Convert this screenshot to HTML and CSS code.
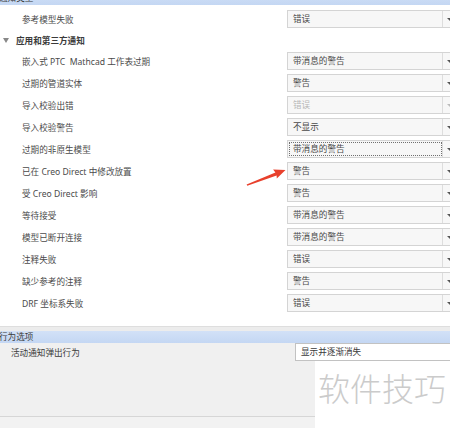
FILE: index.html
```html
<!DOCTYPE html>
<html lang="zh-CN">
<head>
<meta charset="utf-8">
<title>通知设置</title>
<link rel="stylesheet" href="styles.css">
</head>
<body>
<div class="app">
  <div class="panel-head top">通知类型</div>

  <div class="list">
    <div class="row">
      <span class="label">参考模型失败</span>
      <div class="select"><span class="value">错误</span><span class="btn"></span></div>
    </div>

    <div class="group"><span class="caret"></span>应用和第三方通知</div>

    <div class="row">
      <span class="label">嵌入式 PTC&nbsp; Mathcad 工作表过期</span>
      <div class="select"><span class="value">带消息的警告</span><span class="btn"></span></div>
    </div>
    <div class="row">
      <span class="label">过期的管道实体</span>
      <div class="select"><span class="value">警告</span><span class="btn"></span></div>
    </div>
    <div class="row">
      <span class="label">导入校验出错</span>
      <div class="select disabled"><span class="value">错误</span><span class="btn"></span></div>
    </div>
    <div class="row">
      <span class="label">导入校验警告</span>
      <div class="select"><span class="value">不显示</span><span class="btn"></span></div>
    </div>
    <div class="row">
      <span class="label">过期的非原生模型</span>
      <div class="select focused"><span class="value">带消息的警告</span><span class="btn"></span></div>
    </div>
    <div class="row">
      <span class="label">已在 Creo Direct 中修改放置</span>
      <div class="select"><span class="value">警告</span><span class="btn"></span></div>
    </div>
    <div class="row">
      <span class="label">受 Creo Direct 影响</span>
      <div class="select"><span class="value">警告</span><span class="btn"></span></div>
    </div>
    <div class="row">
      <span class="label">等待接受</span>
      <div class="select"><span class="value">带消息的警告</span><span class="btn"></span></div>
    </div>
    <div class="row">
      <span class="label">模型已断开连接</span>
      <div class="select"><span class="value">带消息的警告</span><span class="btn"></span></div>
    </div>
    <div class="row">
      <span class="label">注释失败</span>
      <div class="select"><span class="value">错误</span><span class="btn"></span></div>
    </div>
    <div class="row">
      <span class="label">缺少参考的注释</span>
      <div class="select"><span class="value">警告</span><span class="btn"></span></div>
    </div>
    <div class="row">
      <span class="label">DRF 坐标系失败</span>
      <div class="select"><span class="value">错误</span><span class="btn"></span></div>
    </div>
  </div>

  <div class="splitter"></div>
  <div class="panel-head">行为选项</div>

  <div class="behavior">
    <div class="brow">
      <span class="blabel">活动通知弹出行为</span>
      <div class="select plain"><span class="value">显示并逐渐消失</span></div>
    </div>
  </div>
  <div class="footer"></div>

  <!-- red pointer arrow drawn over the list -->
  <svg class="callout" width="44" height="22" viewBox="244 166 44 22" aria-hidden="true">
    <polygon points="246.6,184.4 275.4,172.4 273.1,169.6 285.5,170 276.8,178.6 276.6,175.6 247.3,185.8" fill="#e8402c"/>
  </svg>

  <div class="watermark">软件技巧</div>
</div>
</body>
</html>
```

FILE: styles.css
```css
* {
  box-sizing: border-box;
  margin: 0;
  padding: 0;
}

html,
body {
  width: 450px;
  height: 428px;
  overflow: hidden;
}

body {
  font-family: "Noto Sans", "Noto Sans CJK SC", sans-serif;
  font-size: 8.6px;
  color: #4a4a4a;
  background: #fff;
}

.app {
  position: relative;
  display: flex;
  flex-direction: column;
  height: 428px;
}

/* blue section title bars */
.panel-head {
  flex: none;
  height: 12px;
  line-height: 12px;
  background: linear-gradient(#d2e1f7, #c4d7f3);
  color: #3a3a3a;
  white-space: nowrap;
  text-indent: -1px;
}

.panel-head.top {
  height: 14px;
  line-height: 14px;
  margin-top: -9px;
}

/* notification list */
.list {
  flex: none;
  background: #fff;
  padding: 3px 0 12px;
}

.row {
  display: grid;
  grid-template-columns: 287px 172px;
  align-items: center;
  height: 22px;
}

.label {
  padding-left: 22px;
  white-space: nowrap;
}

.group {
  display: flex;
  align-items: center;
  height: 20px;
  padding-left: 3px;
  font-weight: bold;
  color: #3a3a3a;
}

.caret {
  width: 0;
  height: 0;
  margin-right: 7px;
  border-left: 3px solid transparent;
  border-right: 3px solid transparent;
  border-top: 5px solid #888;
}

/* combo boxes */
.select {
  display: flex;
  width: 172px;
  height: 18px;
  border: 1px solid #d4d4d4;
  background: #f7f7f7;
}

.select .value {
  flex: 0 0 155px;
  padding-left: 5px;
  line-height: 16px;
  border-right: 1px solid #dddddd;
  white-space: nowrap;
}

.select .btn {
  flex: 0 0 14px;
  display: flex;
  align-items: center;
  justify-content: center;
}

.select .btn::after {
  content: "";
  width: 0;
  height: 0;
  border-left: 3px solid transparent;
  border-right: 3px solid transparent;
  border-top: 3px solid #555;
}

.select.disabled .value {
  color: #b8b8b8;
}

.select.disabled .btn::after {
  border-top-color: #bbb;
}

.select.focused .value {
  outline: 1px dotted #707070;
  outline-offset: -2px;
}

.select.plain {
  background: #fff;
  border-color: #c2c2c2;
  width: 170px;
}

.select.plain .value {
  flex: 1;
  border-right: 0;
  color: #3a3a3a;
}

/* lower panel */
.splitter {
  flex: none;
  height: 5px;
  background: #ececec;
  border-top: 1px solid #dedede;
}

.behavior {
  flex: none;
  height: 74px;
  background: #f0f0f0;
  border-bottom: 1px solid #d6d6d6;
}

.brow {
  display: grid;
  grid-template-columns: 295px 1fr;
  align-items: center;
  height: 18px;
}

.blabel {
  padding-left: 11px;
  color: #3a3a3a;
}

.footer {
  flex: 1;
  background: #f2f2f2;
}

/* overlays */
.callout {
  position: absolute;
  left: 244px;
  top: 166px;
}

.watermark {
  position: absolute;
  left: 315px;
  top: 361px;
  right: 0;
  bottom: 0;
  background: #fff;
  padding: 10px 0 0 3px;
  font-family: "Noto Sans CJK SC", sans-serif;
  font-size: 32px;
  font-weight: 300;
  line-height: 32px;
  color: #cbcbcb;
  white-space: nowrap;
}
```
